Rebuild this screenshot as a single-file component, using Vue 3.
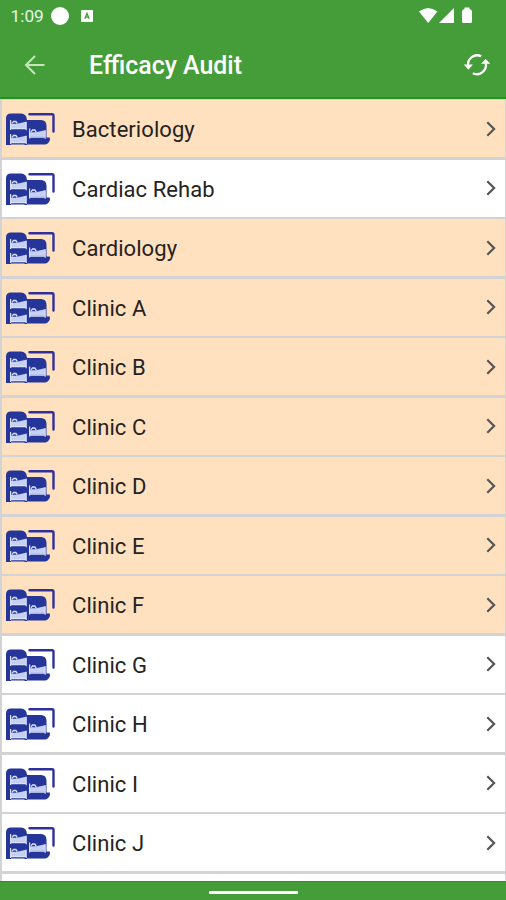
<script setup>
const departments = [
  { name: 'Bacteriology', due: true },
  { name: 'Cardiac Rehab', due: false },
  { name: 'Cardiology', due: true },
  { name: 'Clinic A', due: true },
  { name: 'Clinic B', due: true },
  { name: 'Clinic C', due: true },
  { name: 'Clinic D', due: true },
  { name: 'Clinic E', due: true },
  { name: 'Clinic F', due: true },
  { name: 'Clinic G', due: false },
  { name: 'Clinic H', due: false },
  { name: 'Clinic I', due: false },
  { name: 'Clinic J', due: false },
  { name: '', due: false },
]
const beds = ['translate(4 8)', 'translate(4 22)', 'translate(23 16.5)']
</script>

<template>
  <div class="screen">
    <header class="top">
      <div class="status">
        <span class="time">1:09</span>
        <span class="dot"></span>
        <svg class="badge" viewBox="0 0 12 12"><rect width="12" height="12" rx="1" fill="#fff" /><path d="M3.8 8.8 6 3.4l2.2 5.4M4.7 7.2h2.6" fill="none" stroke="#459d3a" stroke-width="1.3" /></svg>
        <svg class="signals" viewBox="0 0 56 18">
          <path d="M0 4.4Q9.2-2.6 18.4 4.4L9.2 16Z" />
          <path d="M20 16 35 1v15Z" />
          <path d="M45.500 .5h5v1.500q2.500 .5 2.500 2.500V14.500q0 1.500-1.500 1.500h-7q-1.500 0-1.500-1.500V4.500q0-2 2.500-2.500Z" />
        </svg>
      </div>
      <div class="bar">
        <svg class="back" viewBox="0 0 22 22"><path d="M20.500 11H2M11 2 2 11l9 9" /></svg>
        <h1>Efficacy Audit</h1>
        <svg class="sync" viewBox="0 0 28 24">
          <path class="arc" d="M5.200 13A9.200 9.200 0 0 1 18.200 3.200M22.800 10.500A9.200 9.200 0 0 1 9.800 20.300" />
          <path class="tip" d="M.7 11.600h9.200l-4.500 5.200ZM18 10.800h9.200L22.700 6Z" />
        </svg>
      </div>
    </header>

    <main class="list">
      <div v-for="(item, i) in departments" :key="i" class="row" :class="{ due: item.due }">
        <template v-if="item.name">
          <svg class="ward" viewBox="0 0 50 34">
            <path class="frame" d="M23.500 2.300h22.500q1.500 0 1.500 1.500V19.500" />
            <path class="block" d="M0 32.500V6.500Q0 1.500 5 1.500h10q5.500 0 6 6.500h14q5.500 0 5.500 6v11.500h3.300q.8 2.500-.8 4.500t-3.500 2.500Z" />
            <g v-for="(spot, s) in beds" :key="s" :transform="spot">
              <path class="mattress" d="M1 3.800h6l9-2v6.400H1Z" />
              <path class="bed" d="M.6 0v10M0 8.600h16.500M16.200 1.800v8.500" />
              <path class="pillow" d="M2 3.400 3.500 1.500h2.300l1.500 2" />
            </g>
            <path class="under" d="M0 32.500h5M18.500 32.500h2.500" />
          </svg>
          <span class="name">{{ item.name }}</span>
          <svg class="chevron" viewBox="0 0 10 16"><path d="m1.300 1.300 6.800 6.700-6.800 6.700" /></svg>
        </template>
      </div>
    </main>

    <footer class="nav"><span class="handle"></span></footer>
  </div>
</template>

<style>
body {
  margin: 0;
}
</style>

<style scoped>
.screen {
  display: flex;
  flex-direction: column;
  width: 506px;
  height: 900px;
  overflow: hidden;
  background: #459d3a;
  font-family: Roboto, sans-serif;
}
.top {
  box-sizing: border-box;
  flex: none;
  height: 99px;
  border-bottom: 2px solid #219423;
  color: #fff;
}
.status {
  display: flex;
  align-items: center;
  box-sizing: border-box;
  height: 32px;
  padding: 0 31px 0 10.500px;
}
.time {
  width: 40.500px;
  font-size: 17.300px;
  color: #e6f5e3;
}
.dot {
  width: 18px;
  height: 18px;
  border-radius: 50%;
  background: #fff;
}
.badge {
  width: 12px;
  height: 12px;
  margin-left: 12px;
}
.signals {
  width: 56px;
  height: 18px;
  margin-left: auto;
  fill: #fff;
}
.bar {
  display: flex;
  align-items: center;
  box-sizing: border-box;
  height: 65px;
  padding: 0 15px 0 24px;
}
.back {
  width: 22px;
  height: 22px;
  fill: none;
  stroke: #c3e6bb;
  stroke-width: 2;
}
h1 {
  margin: 2px 0 0 43px;
  font-size: 24.900px;
  font-weight: 500;
  line-height: 30px;
}
.sync {
  width: 28px;
  height: 24px;
  margin-left: auto;
}
.arc {
  fill: none;
  stroke: #fff;
  stroke-width: 2.300;
}
.tip {
  fill: #fff;
}
.list {
  display: flex;
  flex: 1;
  flex-direction: column;
  gap: 2.500px;
  min-height: 0;
  padding: 1px 1px 0 2px;
  overflow: hidden;
  background: #d3d3d5;
}
.row {
  display: flex;
  flex: none;
  align-items: center;
  box-sizing: border-box;
  height: 57.040px;
  padding: 1px 9px 0 4px;
  background: #fff;
}
.due {
  background: #ffe0bf;
}
.ward {
  width: 50px;
  height: 34px;
  fill: none;
}
.frame {
  stroke: #30309a;
  stroke-width: 2.400;
  stroke-linecap: round;
  stroke-linejoin: round;
}
.block {
  fill: #25359a;
}
.bed {
  stroke: #d9e0fa;
  stroke-width: 1.200;
}
.mattress {
  fill: #c5d0f2;
}
.pillow {
  stroke: #d9e0fa;
  stroke-width: 1.300;
}
.under {
  stroke: #25359a;
  stroke-width: 1;
}
.name {
  margin: 1px 0 0 16px;
  font-size: 22px;
  letter-spacing: 0.060px;
  color: #252321;
}
.chevron {
  width: 10px;
  height: 16px;
  margin: -1px 0 0 auto;
  fill: none;
  stroke: #555;
  stroke-width: 2.200;
}
.nav {
  display: flex;
  flex: none;
  align-items: center;
  justify-content: center;
  box-sizing: border-box;
  height: 19px;
  border-top: 1px solid #219423;
}
.handle {
  width: 89px;
  height: 3px;
  margin-top: 2px;
  border-radius: 1px;
  background: #fff;
}
</style>
